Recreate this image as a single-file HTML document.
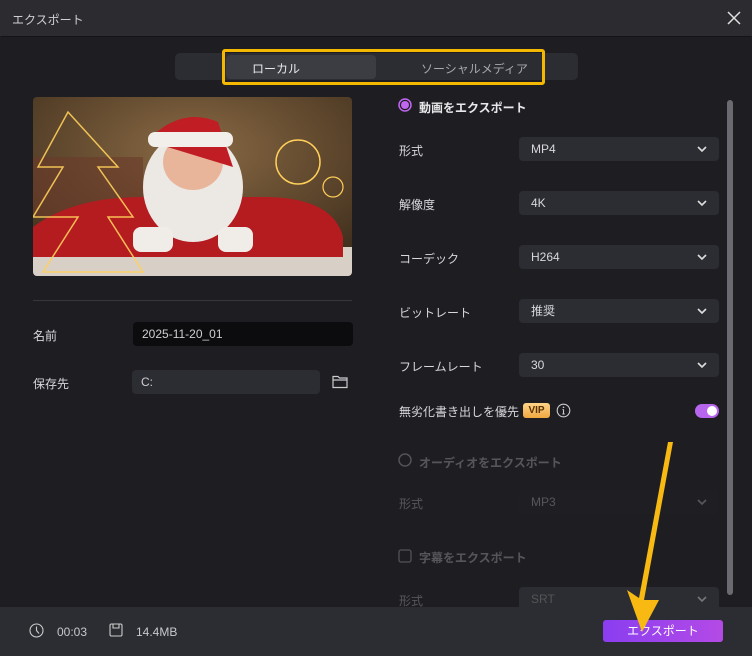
<!DOCTYPE html>
<html><head><meta charset="utf-8"><style>
*{box-sizing:border-box;margin:0;padding:0}
body{width:752px;height:656px;background:#1e1e22;font-family:"Liberation Sans","Noto Sans CJK JP",sans-serif;color:#d8d8dc;font-size:12px;position:relative;overflow:hidden}
.a{position:absolute}
.dd{position:absolute;left:519px;width:200px;height:24px;background:#2c2d33;border-radius:4px;padding-left:12px;line-height:24px;font-size:12px;color:#d8d8dc}
.dd svg{position:absolute;right:12px;top:8px}
.lbl{position:absolute;left:399px;font-size:12px;color:#d8d8dc}
.dim{opacity:.3}
</style></head><body>
<div class="a" style="left:0;top:0;width:752px;height:36px;background:#2b2b30"></div>
<div class="a" style="left:12px;top:11px;font-size:12px;color:#d0d0d4">エクスポート</div>
<svg class="a" style="left:727px;top:11px" width="14" height="14"><path d="M1 1L13 13M13 1L1 13" stroke="#e0e0e0" stroke-width="1.5"/></svg>
<div class="a" style="left:1px;top:36px;width:750px;height:1px;background:#141416"></div>

<div class="a" style="left:175px;top:53px;width:403px;height:27px;background:#2c2d32;border-radius:5px"></div>
<div class="a" style="left:226px;top:55px;width:150px;height:24px;background:#3c3d43;border-radius:4px"></div>
<div class="a" style="left:222px;top:49px;width:323px;height:36px;border:3px solid #f5b800;border-radius:3px"></div>
<div class="a" style="left:252px;top:60px;font-size:12px;color:#e8e8ea">ローカル</div>
<div class="a" style="left:421px;top:60px;font-size:12px;color:#a8a8ae">ソーシャルメディア</div>

<svg class="a" style="left:33px;top:97px;border-radius:4px" width="319" height="179" viewBox="0 0 319 179">
<defs><radialGradient id="bg" cx="0.5" cy="0.3" r="0.8"><stop offset="0" stop-color="#8a6a44"/><stop offset="1" stop-color="#3a2a1a"/></radialGradient></defs>
<rect width="319" height="179" fill="url(#bg)"/>
<rect x="0" y="60" width="110" height="60" fill="#6a3a2a" opacity=".6"/>
<rect x="0" y="150" width="319" height="29" fill="#d8cfc6"/>
<path d="M0 130 Q40 100 110 100 L230 100 Q300 100 310 140 L310 160 L0 160Z" fill="#b41c20"/>
<ellipse cx="160" cy="90" rx="50" ry="55" fill="#ece8e4"/>
<ellipse cx="160" cy="65" rx="30" ry="28" fill="#e9b59a"/>
<path d="M118 40 Q150 10 185 25 L200 70 L118 45Z" fill="#c01e24"/>
<rect x="115" y="35" width="85" height="15" rx="7" fill="#f2eeea"/>
<rect x="100" y="130" width="40" height="25" rx="8" fill="#f0ece8"/>
<rect x="185" y="130" width="35" height="25" rx="8" fill="#f0ece8"/>
<path d="M35 15 L5 70 L30 70 L0 120 L45 120 L10 175 L110 175 L75 120 L100 120 L65 70 L85 70Z" fill="none" stroke="#ffcf5a" stroke-width="1.5" opacity=".9"/>
<circle cx="265" cy="65" r="22" fill="none" stroke="#ffcf5a" stroke-width="1.5"/>
<circle cx="300" cy="90" r="10" fill="none" stroke="#ffcf5a" stroke-width="1.2"/>
</svg>

<div class="a" style="left:33px;top:300px;width:319px;height:1px;background:#36373c"></div>
<div class="a" style="left:33px;top:327px;font-size:12px">名前</div>
<div class="a" style="left:133px;top:322px;width:220px;height:24px;background:#0c0c0e;border-radius:4px;padding-left:9px;line-height:24px;color:#cfcfd3">2025-11-20_01</div>
<div class="a" style="left:33px;top:375px;font-size:12px">保存先</div>
<div class="a" style="left:132px;top:370px;width:188px;height:24px;background:#2c2d33;border-radius:4px;padding-left:9px;line-height:24px;color:#cfcfd3">C:</div>
<svg class="a" style="left:332px;top:374px" width="16" height="15" viewBox="0 0 16 15"><path d="M1 2.5H6L7.5 4H15V13.5H1Z M1 6H15" fill="none" stroke="#ccc" stroke-width="1.2"/></svg>

<svg class="a" style="left:398px;top:98px" width="14" height="14"><circle cx="7" cy="7" r="6" fill="none" stroke="#c066f0" stroke-width="1.5"/><circle cx="7" cy="7" r="4" fill="#c066f0"/></svg>
<div class="a" style="left:419px;top:99px;font-weight:bold;color:#e8e8ea">動画をエクスポート</div>
<div class="lbl" style="top:142px">形式</div><div class="dd" style="top:137px">MP4<svg width="10" height="8"><path d="M1 2L5 6L9 2" stroke="#ddd" stroke-width="1.6" fill="none"/></svg></div>
<div class="lbl" style="top:196px">解像度</div><div class="dd" style="top:191px">4K<svg width="10" height="8"><path d="M1 2L5 6L9 2" stroke="#ddd" stroke-width="1.6" fill="none"/></svg></div>
<div class="lbl" style="top:250px">コーデック</div><div class="dd" style="top:245px">H264<svg width="10" height="8"><path d="M1 2L5 6L9 2" stroke="#ddd" stroke-width="1.6" fill="none"/></svg></div>
<div class="lbl" style="top:304px">ビットレート</div><div class="dd" style="top:299px">推奨<svg width="10" height="8"><path d="M1 2L5 6L9 2" stroke="#ddd" stroke-width="1.6" fill="none"/></svg></div>
<div class="lbl" style="top:358px">フレームレート</div><div class="dd" style="top:353px">30<svg width="10" height="8"><path d="M1 2L5 6L9 2" stroke="#ddd" stroke-width="1.6" fill="none"/></svg></div>
<div class="lbl" style="top:403px">無劣化書き出しを優先</div>
<div class="a" style="left:523px;top:403px;width:27px;height:15px;background:linear-gradient(#ffd48a,#f0a840);border-radius:3px;color:#5a3300;font-size:10px;font-weight:bold;text-align:center;line-height:15px">VIP</div>
<svg class="a" style="left:556px;top:403px" width="15" height="15"><circle cx="7.5" cy="7.5" r="6.3" fill="none" stroke="#ccc" stroke-width="1.1"/><path d="M7.5 6.5V11M6.3 11H8.7M6.5 6.5H7.5" stroke="#ccc" stroke-width="1.1"/><circle cx="7.5" cy="4.3" r=".8" fill="#ccc"/></svg>
<div class="a" style="left:695px;top:404px;width:24px;height:14px;background:#b865ee;border-radius:7px"></div>
<div class="a" style="left:707px;top:406px;width:10px;height:10px;background:#fff;border-radius:5px"></div>

<div class="dim">
<svg class="a" style="left:398px;top:453px" width="14" height="14"><circle cx="7" cy="7" r="6" fill="none" stroke="#ccc" stroke-width="1.5"/></svg>
<div class="a" style="left:419px;top:454px;font-weight:bold">オーディオをエクスポート</div>
<div class="lbl" style="top:495px">形式</div>
<div class="dd" style="top:490px;background:#232428">MP3<svg width="10" height="8"><path d="M1 2L5 6L9 2" stroke="#ddd" stroke-width="1.6" fill="none"/></svg></div>
<svg class="a" style="left:398px;top:549px" width="14" height="14"><rect x="1" y="1" width="12" height="12" rx="2" fill="none" stroke="#ccc" stroke-width="1.3"/></svg>
<div class="a" style="left:419px;top:549px;font-weight:bold">字幕をエクスポート</div>
<div class="lbl" style="top:592px">形式</div>
</div>
<div class="dd" style="top:587px;color:#555">SRT<svg width="10" height="8"><path d="M1 2L5 6L9 2" stroke="#777" stroke-width="1.6" fill="none"/></svg></div>

<div class="a" style="left:727px;top:100px;width:6px;height:495px;background:#6a6a70;border-radius:3px"></div>

<div class="a" style="left:0;top:607px;width:752px;height:49px;background:#2c2d32"></div>
<svg class="a" style="left:29px;top:623px" width="15" height="15"><circle cx="7.5" cy="7.5" r="6.5" fill="none" stroke="#ccc" stroke-width="1.1"/><path d="M7.5 3.5V7.5L10 10.5" fill="none" stroke="#ccc" stroke-width="1.1"/></svg>
<div class="a" style="left:57px;top:625px;color:#c8c8cc">00:03</div>
<svg class="a" style="left:109px;top:623px" width="14" height="14"><rect x="1" y="1" width="12" height="12" rx="1.5" fill="none" stroke="#ccc" stroke-width="1.1"/><path d="M4 1V5H10V1" fill="none" stroke="#ccc" stroke-width="1.1"/></svg>
<div class="a" style="left:136px;top:625px;color:#c8c8cc">14.4MB</div>
<div class="a" style="left:603px;top:620px;width:120px;height:22px;background:linear-gradient(90deg,#8a3ef0,#b44ae6);border-radius:3px;color:#fff;text-align:center;line-height:22px;font-size:12px">エクスポート</div>

<svg class="a" style="left:615px;top:440px" width="70" height="200"><path d="M58 2 L29 160 L44 160 L27 192 L12 150 L24 158 L53 2Z" fill="#f7b912"/></svg>
</body></html>
